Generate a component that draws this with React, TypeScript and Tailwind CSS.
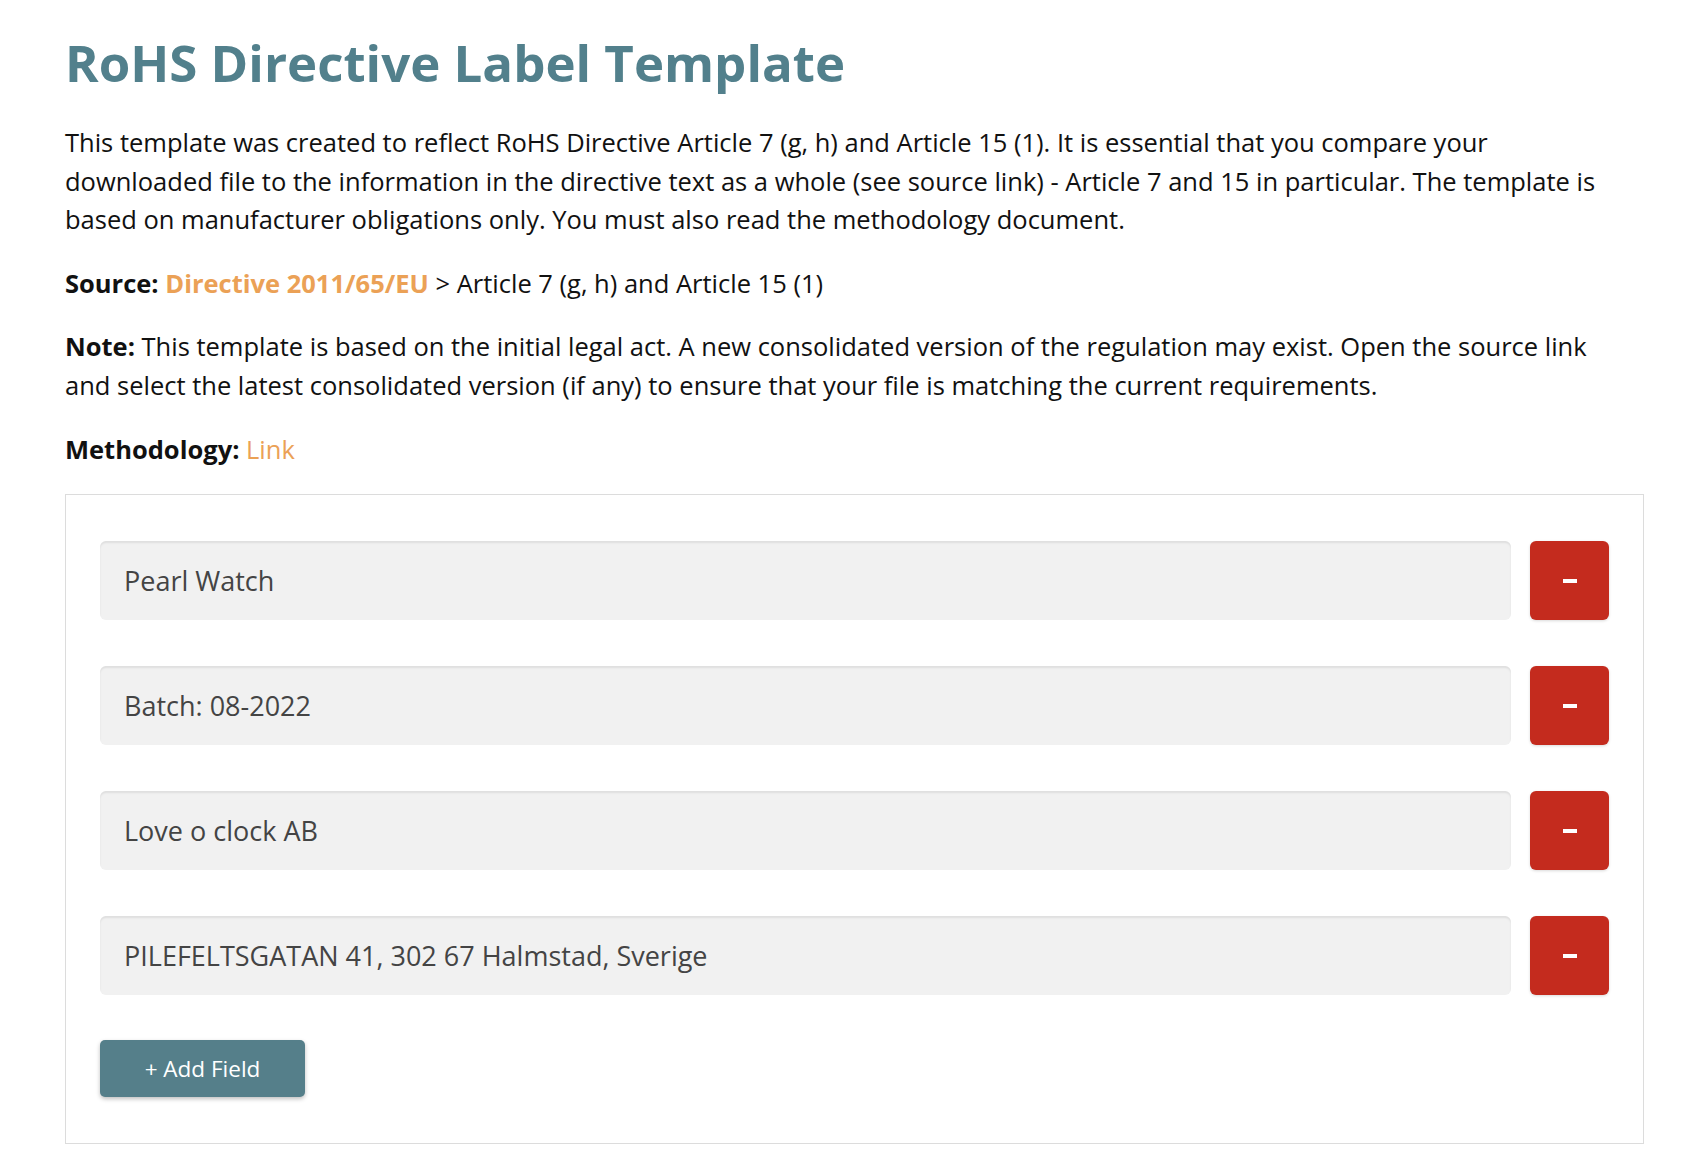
import { useState } from 'react'

const initialFields = [
  'Pearl Watch',
  'Batch: 08-2022',
  'Love o clock AB',
  'PILEFELTSGATAN 41, 302 67 Halmstad, Sverige',
]

export default function App() {
  const [fields, setFields] = useState(initialFields)

  return (
    <div className="min-h-screen bg-white font-['Open_Sans',sans-serif] text-[#111]">
      <div className="pl-[65px] pr-[51px] pt-[30px]">
        {/* Header */}
        <h1 className="text-[51px] leading-[64px] font-bold text-[#52808c] mb-[29px]">
          RoHS Directive Label Template
        </h1>

        <p className="text-[25.5px] leading-[38.6px] mb-[25px]">
          This template was created to reflect RoHS Directive Article 7 (g, h) and Article 15 (1). It is essential that you compare your
          <br />
          downloaded file to the information in the directive text as a whole (see source link) - Article 7 and 15 in particular. The template is
          <br />
          based on manufacturer obligations only. You must also read the methodology document.
        </p>

        <p className="text-[25.5px] leading-[38.6px] mb-[25px]">
          <strong className="font-bold">Source: </strong>
          <a className="font-bold text-[#eba156]">Directive 2011/65/EU</a>
          {' > Article 7 (g, h) and Article 15 (1)'}
        </p>

        <p className="text-[25.5px] leading-[38.6px] mb-[25px]">
          <strong className="font-bold">Note:</strong> This template is based on the initial legal act. A new consolidated version of the regulation may exist. Open the source link
          <br />
          and select the latest consolidated version (if any) to ensure that your file is matching the current requirements.
        </p>

        <p className="text-[25.5px] leading-[38.6px] mb-[26px]">
          <strong className="font-bold">Methodology: </strong>
          <a className="text-[#eba156]">Link</a>
        </p>

        {/* Fields */}
        <div className="border border-[#dcdcdc] pt-[46px] pb-[46px] px-[34px]">
          <div className="flex flex-col gap-[46px]">
            {fields.map((value, i) => (
              <div key={i} className="flex items-center gap-[19px]">
                <input
                  value={value}
                  onChange={(e) => setFields(fields.map((f, j) => (j === i ? e.target.value : f)))}
                  className="flex-1 h-[79px] rounded-[6px] bg-[#f1f1f1] px-[24px] text-[27px] text-[#444] shadow-[inset_0_2px_2px_rgba(0,0,0,0.08)] outline-none"
                />
                <button
                  onClick={() => setFields(fields.filter((_, j) => j !== i))}
                  className="w-[79px] h-[79px] rounded-[6px] bg-[#c42b1e] flex items-center justify-center shadow-[0_1px_3px_rgba(0,0,0,0.15)]"
                >
                  <span className="block w-[14px] h-[4px] bg-white" />
                </button>
              </div>
            ))}
          </div>
          <button
            onClick={() => setFields([...fields, ''])}
            className="mt-[45px] w-[205px] h-[57px] rounded-[5px] bg-[#557f8a] text-white text-[22.5px] shadow-[0_2px_4px_rgba(0,0,0,0.25)]"
          >
            + Add Field
          </button>
        </div>
      </div>
    </div>
  )
}
